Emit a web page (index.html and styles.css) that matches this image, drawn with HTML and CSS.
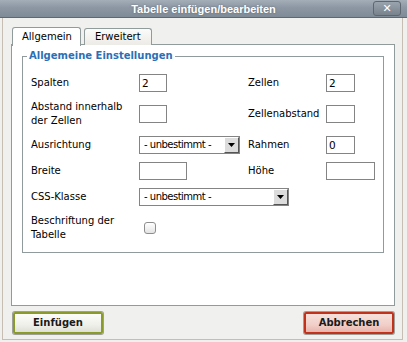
FILE: index.html
```html
<!DOCTYPE html>
<html lang="de">
<head>
<meta charset="utf-8">
<title>Tabelle einfügen/bearbeiten</title>
<link rel="stylesheet" href="styles.css">
</head>
<body>
<div class="titlebar">
  <span class="title">Tabelle einfügen/bearbeiten</span>
  <span class="close">✕</span>
</div>
<div class="frame">
  <div class="tabs">
    <div class="tab active">Allgemein</div>
    <div class="tab">Erweitert</div>
  </div>
  <div class="panel">
    <fieldset class="group">
      <legend class="legend">Allgemeine Einstellungen</legend>
      <div class="grid">
        <div class="label">Spalten</div>
        <div class="field"><div class="input w28">2</div></div>
        <div class="label">Zellen</div>
        <div class="field"><div class="input w29">2</div></div>

        <div class="label">Abstand innerhalb der Zellen</div>
        <div class="field"><div class="input w28"></div></div>
        <div class="label">Zellenabstand</div>
        <div class="field"><div class="input w29"></div></div>

        <div class="label">Ausrichtung</div>
        <div class="field"><div class="select w101"><span class="sel-text">- unbestimmt -</span><span class="sel-btn"><svg width="7" height="4" viewBox="0 0 7 4"><path d="M0 0H7L3.5 4Z" fill="#000"/></svg></span></div></div>
        <div class="label">Rahmen</div>
        <div class="field"><div class="input w29">0</div></div>

        <div class="label">Breite</div>
        <div class="field"><div class="input w48"></div></div>
        <div class="label">Höhe</div>
        <div class="field"><div class="input w49"></div></div>

        <div class="label">CSS-Klasse</div>
        <div class="field span3"><div class="select w150"><span class="sel-text">- unbestimmt -</span><span class="sel-btn"><svg width="7" height="4" viewBox="0 0 7 4"><path d="M0 0H7L3.5 4Z" fill="#000"/></svg></span></div></div>

        <div class="label">Beschriftung der Tabelle</div>
        <div class="field"><div class="checkbox"></div></div>
      </div>
    </fieldset>
  </div>
  <div class="buttons">
    <div class="btn insert">Einfügen</div>
    <div class="btn cancel">Abbrechen</div>
  </div>
</div>
</body>
</html>
```
FILE: styles.css
```css
html, body {
  margin: 0;
  padding: 0;
}
body {
  width: 407px;
  height: 342px;
  background: #f0f0ee;
  font-family: "DejaVu Sans", Verdana, sans-serif;
  font-size: 10px;
  color: #000;
  overflow: hidden;
}
.titlebar {
  height: 18px;
  display: flex;
  align-items: center;
  justify-content: center;
  position: relative;
  background: linear-gradient(#a4aeb9, #8c97a3 45%, #808b98);
  border-bottom: 1px solid #5e6873;
  box-sizing: border-box;
}
.title {
  font-family: "Liberation Sans", Arial, sans-serif;
  font-weight: bold;
  font-size: 11px;
  color: #fff;
  text-shadow: 0 0 2px rgba(60, 70, 80, 0.6);
}
.close {
  position: absolute;
  left: 373px;
  top: 1px;
  width: 28px;
  height: 15px;
  box-sizing: border-box;
  border: 1px solid #5d6772;
  border-radius: 3px;
  background: linear-gradient(#9aa4ae, #77828d);
  color: #fff;
  font-family: "DejaVu Sans", sans-serif;
  font-weight: bold;
  font-size: 11px;
  line-height: 13px;
  text-align: center;
}
.frame {
  margin: 0 4px 0 2px;
  height: 322px;
  box-sizing: border-box;
  border-left: 1px solid #c7beb3;
  border-right: 1px solid #c7beb3;
  border-bottom: 1px solid #c7beb3;
  padding: 9px 7px 0 8px;
}
.tabs {
  display: flex;
  align-items: flex-start;
  gap: 3px;
  padding-left: 1px;
  height: 17px;
  position: relative;
  z-index: 1;
}
.tab {
  height: 17px;
  box-sizing: border-box;
  margin-top: 1px;
  padding: 0 10px;
  line-height: 15px;
  border: 1px solid #919b9c;
  border-bottom: none;
  border-radius: 3px 3px 0 0;
  background: linear-gradient(#fbfbfa, #ecebe6);
}
.tab.active {
  margin-top: 0;
  height: 19px;
  line-height: 17px;
  background: #fff;
  padding: 0 8px 0 9px;
}
.panel {
  height: 262px;
  box-sizing: border-box;
  background: #fff;
  border: 1px solid #919b9c;
  padding: 5px 10px 0 10px;
}
.group {
  margin: 0;
  min-width: 0;
  border: 1px solid #919b9c;
  padding: 12px 8px 10px 8px;
}
.legend {
  margin-left: -4px;
  padding: 0 2px;
  font-weight: bold;
  color: #2b6fb6;
  line-height: 12px;
}
.grid {
  display: grid;
  grid-template-columns: 108px 109px 78px 1fr;
  grid-template-rows: 18px 28px 18px 18px 18px 28px;
  row-gap: 8px;
  align-items: center;
}
.label {
  line-height: 14px;
  padding-right: 4px;
}
.field {
  display: flex;
  align-items: center;
}
.span3 {
  grid-column: span 3;
}
.input {
  height: 18px;
  box-sizing: border-box;
  border: 1px solid #848484;
  background: #fff;
  font-size: 10.5px;
  line-height: 16px;
  padding-left: 2px;
}
.w28 { width: 28px; }
.w29 { width: 29px; }
.w48 { width: 48px; }
.w49 { width: 49px; }
.w101 { width: 101px; }
.w150 { width: 150px; }
.select {
  height: 18px;
  box-sizing: border-box;
  border: 1px solid #848484;
  background: #fff;
  display: flex;
  align-items: stretch;
  font-size: 10px;
  letter-spacing: -0.5px;
  white-space: nowrap;
}
.sel-text {
  flex: 1;
  line-height: 16px;
  padding-left: 4px;
  overflow: hidden;
}
.sel-btn {
  width: 15px;
  box-sizing: border-box;
  border: 1px solid;
  border-color: #fff #555 #555 #fff;
  background: #dcdcdc;
  display: flex;
  align-items: center;
  justify-content: center;
}
.checkbox {
  margin-left: 5px;
  width: 12px;
  height: 12px;
  box-sizing: border-box;
  border: 1px solid #8e8e8e;
  border-radius: 3px;
  background: linear-gradient(#fff, #e4e4e4);
}
.buttons {
  display: flex;
  justify-content: space-between;
  padding: 6px 1px 0 2px;
}
.btn {
  width: 90px;
  height: 22px;
  box-sizing: border-box;
  border: 2px solid;
  border-radius: 2px;
  font-weight: bold;
  font-size: 10px;
  color: #1a1a1a;
  text-align: center;
  line-height: 18px;
  box-shadow: 0 0 0 1px rgba(60, 60, 50, 0.45);
}
.btn.insert {
  border-color: #8b9b2b;
  background: linear-gradient(#fcfcfa, #f0f0ea 60%, #dedfd6);
}
.btn.cancel {
  border-color: #c2321b;
  background: linear-gradient(#f8e0dc, #f1cfc8 60%, #e6b5ab);
}
```
